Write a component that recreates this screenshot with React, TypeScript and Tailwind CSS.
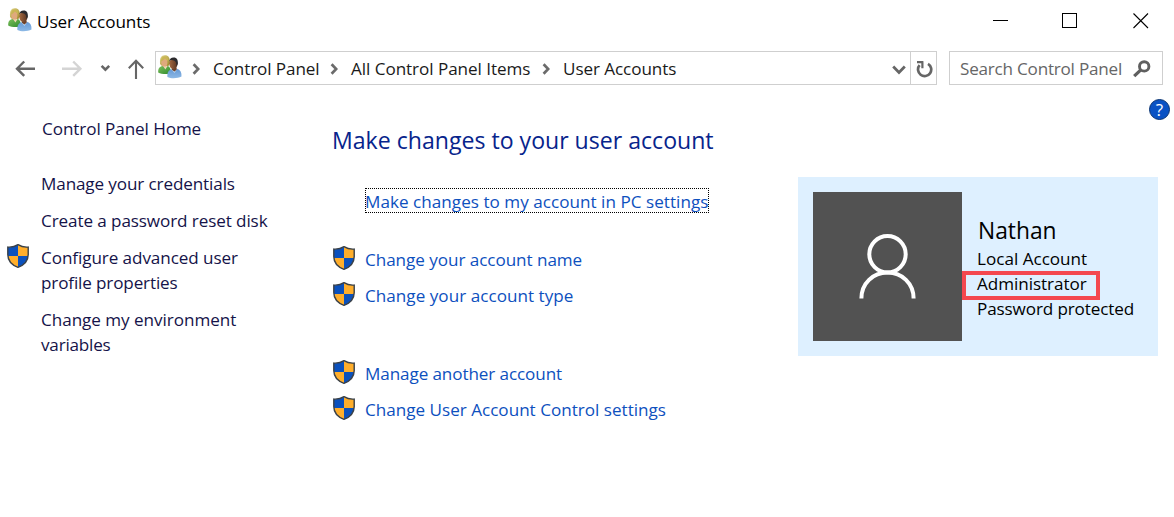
import type { ReactNode } from "react";

function UsersIcon() {
  return (
    <svg width="24" height="24" viewBox="0 0 24 24" className="block shrink-0">
      <defs>
        <linearGradient id="green" x1="0" y1="0" x2="1" y2="1">
          <stop offset="0" stopColor="#7cbf5c" />
          <stop offset="1" stopColor="#2f8a2b" />
        </linearGradient>
        <linearGradient id="blue" x1="0" y1="0" x2="0" y2="1">
          <stop offset="0" stopColor="#6598d4" />
          <stop offset="1" stopColor="#8db9e6" />
        </linearGradient>
        <linearGradient id="hair" x1="0" y1="0" x2="1" y2="1">
          <stop offset="0" stopColor="#e3d78a" />
          <stop offset="1" stopColor="#9a8526" />
        </linearGradient>
        <linearGradient id="brown" x1="0" y1="0" x2="1" y2="0">
          <stop offset="0" stopColor="#a4683f" />
          <stop offset="1" stopColor="#5a3522" />
        </linearGradient>
      </defs>
      <path d="M0.2 17.4C0 13.4 1.4 11.8 4.6 11L10 11C12 12 13 14 13 18.4C9 19.4 3.2 19.2 0.2 17.4Z" fill="url(#green)" />
      <path d="M5 11L7.4 14.6L9.6 11Z" fill="#f1d3b4" />
      <path d="M2 8.6C1.6 3.2 3 0.2 6.8 0.2C10.6 0.2 12 2.6 12 8.4L10.4 11L3 10.6Z" fill="url(#hair)" />
      <ellipse cx="6.4" cy="7.4" rx="3" ry="4.2" fill="#dfa97c" />
      <path d="M3 6.4C4.4 5.8 6.2 4.8 7 3.2C8 4.6 9.4 5.6 10.4 6.2C10.2 2.8 9 1.4 6.6 1.4C4.2 1.4 3.1 3 3 6.4Z" fill="#c9b654" />
      <path d="M9.4 22C9 17.2 10.6 15 13.6 14.2L19 13.800C22.200 14.600 23.700 17.200 23.500 21.600C19.800 23.600 13.200 24 9.400 22Z" fill="url(#blue)" />
      <path d="M13.4 14.2L16.4 18L19.2 14Z" fill="#c3d8ef" />
      <path d="M13.8 12.4H18.6V14.8L16.4 16.6L14 14.8Z" fill="#6e4128" />
      <ellipse cx="15.4" cy="8.800" rx="4.100" ry="5.300" fill="url(#brown)" />
      <path d="M11.2 6.400C11.600 3.600 13 2.400 15.600 2.400C19 2.400 20.200 5 19.800 9L18.600 11.200L18 7.400C16.800 5.600 14.800 4.800 12.800 5Z" fill="#2c2a2d" />
    </svg>
  );
}

function Shield() {
  return (
    <svg width="22" height="24" viewBox="0 0 22 24" className="block shrink-0">
      <defs>
        <clipPath id="shieldShape">
          <path d="M11 0.7C8 2.6 4.4 3.4 0.8 3.1V10.4C0.8 16.6 4.6 20.8 11 23.3C17.4 20.8 21.2 16.6 21.2 10.4V3.1C17.6 3.4 14 2.6 11 0.7Z" />
        </clipPath>
      </defs>
      <g clipPath="url(#shieldShape)">
        <rect width="22" height="24" fill="#0b51bd" />
        <rect x="11" width="11" height="12" fill="#ffae2b" />
        <rect y="12" width="11" height="12" fill="#ffae2b" />
      </g>
      <path d="M11 0.7C8 2.6 4.4 3.4 0.8 3.1V10.4C0.8 16.6 4.6 20.8 11 23.3C17.4 20.8 21.2 16.6 21.2 10.4V3.1C17.6 3.4 14 2.6 11 0.7Z" fill="none" stroke="#3a4148" strokeWidth="1.4" />
    </svg>
  );
}

function Crumb() {
  return (
    <svg width="8" height="12" viewBox="0 0 8 12" className="block shrink-0">
      <path d="M1.6 1.2L6.2 6L1.6 10.8" fill="none" stroke="#6b6b6b" strokeWidth="2.7" />
    </svg>
  );
}

function TaskLink({ children }: { children: ReactNode }) {
  return (
    <li className="flex h-[25px] items-start gap-[10px]">
      <div className="-mt-px">
        <Shield />
      </div>
      <a className="text-[#0d50be]">{children}</a>
    </li>
  );
}

function TitleBar() {
  return (
    <header className="flex h-[51px] items-start pt-2 pl-2">
      <UsersIcon />
      <h1 className="mt-px ml-[5px] tracking-[-0.08px]">User Accounts</h1>
      <svg width="156" height="16" viewBox="0 0 156 16" className="mt-[5px] mr-[25px] ml-auto block" fill="none" stroke="#000" strokeWidth="1.1">
        <path d="M0 7.5H15" shapeRendering="crispEdges" />
        <rect x="69.5" y="0.5" width="14" height="14" shapeRendering="crispEdges" />
        <path d="M140.5 0.5L155 15M155 0.5L140.5 15" />
      </svg>
    </header>
  );
}

function NavBar() {
  return (
    <nav className="flex h-[34px] text-[#1a1a1a]">
      <svg width="155" height="34" viewBox="0 0 155 34" className="block shrink-0" fill="none">
        <path d="M17 17.7H35M24.2 10.500L17 17.700L24.200 24.900" stroke="#666" strokeWidth="2.4" />
        <path d="M62 17.7H80M73.2 10.5L80.4 17.7L73.2 24.9" stroke="#d4d4d4" strokeWidth="2.4" />
        <path d="M101.6 14.8L105.4 18.6L109.2 14.8" stroke="#666" strokeWidth="2.6" />
        <path d="M136 28V10M128.8 17.200L136 9.800L143.200 17.200" stroke="#666" strokeWidth="2.1" />
      </svg>
      <div className="flex w-[782px] border border-[#cfcfcf]">
        <div className="flex flex-1 items-start pt-[3px] pl-[2px]">
          <div className="w-[34px]">
            <UsersIcon />
          </div>
          <div className="mt-[8px] w-[21px]">
            <Crumb />
          </div>
          <span className="mt-px w-[117px] tracking-[-0.1px] whitespace-nowrap">Control Panel</span>
          <div className="mt-[8px] w-[21px]">
            <Crumb />
          </div>
          <span className="mt-px w-[191px] tracking-[-0.05px] whitespace-nowrap">All Control Panel Items</span>
          <div className="mt-[8px] w-[21px]">
            <Crumb />
          </div>
          <span className="mt-px tracking-[-0.08px] whitespace-nowrap">User Accounts</span>
          <svg width="14" height="10" viewBox="0 0 14 10" className="mt-[10px] mr-[4px] ml-auto block">
            <path d="M1.2 1.6L7 7.4L12.8 1.6" fill="none" stroke="#666" strokeWidth="2.8" />
          </svg>
        </div>
        <div className="flex w-[26px] items-start border-l border-[#cfcfcf] pt-[8px] pl-[4px]">
          <svg width="18" height="18" viewBox="0 0 18 18" className="block" fill="none" stroke="#666">
            <path d="M4.600 5.200A6.600 6.600 0 1 0 13 3.800" strokeWidth="2.700" />
            <path d="M2 2.200H8.400M7.400 2.200V8.200" strokeWidth="2.200" />
          </svg>
        </div>
      </div>
      <div className="ml-[12px] flex w-[214px] items-start border border-[#cfcfcf] pt-[3px] pl-[10px] text-[#666]">
        <span className="mt-px w-[173px] tracking-[-0.22px] whitespace-nowrap">Search Control Panel</span>
        <svg width="18" height="18" viewBox="0 0 18 18" className="mt-[5px] block shrink-0" fill="none" stroke="#5f5f5f">
          <circle cx="11.2" cy="6.4" r="4.700" strokeWidth="2.900" />
          <path d="M7.8 9.8L1.200 16.200" strokeWidth="3.200" />
        </svg>
      </div>
    </nav>
  );
}

function Sidebar() {
  return (
    <aside className="w-[333px] pt-[31px] pl-[7px] tracking-[-0.08px] text-[#151349]">
      <a className="block pl-[35px]">Control Panel Home</a>
      <ul className="mt-[30px] flex flex-col gap-[12px]">
        <li className="pl-[34px] tracking-[-0.12px]">Manage your credentials</li>
        <li className="pl-[34px] tracking-[-0.1px]">Create a password reset disk</li>
        <li className="flex items-start gap-[12px]">
          <div className="-mt-px">
            <Shield />
          </div>
          <span>
            Configure advanced user
            <br />
            <span className="tracking-[-0.14px]">profile properties</span>
          </span>
        </li>
        <li className="pl-[34px]">
          <span className="tracking-[-0.04px]">Change my environment</span>
          <br />
          <span className="tracking-[-0.2px]">variables</span>
        </li>
      </ul>
    </aside>
  );
}

function Main() {
  return (
    <main className="w-[465px] pt-[39px]">
      <h2 className="-ml-px text-[23.1px] leading-[32px] text-[#07248c]">Make changes to your user account</h2>
      <a className="mt-[32px] ml-[32px] flex h-[25px] w-[344px] items-center text-[#0d50be] outline-1 -outline-offset-1 outline-dotted outline-black">
        <span className="-mb-[2px] tracking-[0.03px] whitespace-nowrap">Make changes to my account in PC settings</span>
      </a>
      <ul className="mt-[34px] flex flex-col gap-[11px]">
        <TaskLink>
          <span className="tracking-[-0.05px]">Change your account name</span>
        </TaskLink>
        <TaskLink>
          <span className="tracking-[0.03px]">Change your account type</span>
        </TaskLink>
      </ul>
      <ul className="mt-[53px] flex flex-col gap-[11px]">
        <TaskLink>
          <span className="tracking-[-0.1px]">Manage another account</span>
        </TaskLink>
        <TaskLink>Change User Account Control settings</TaskLink>
      </ul>
    </main>
  );
}

function AccountCard() {
  return (
    <section className="flex h-[179px] w-[360px] bg-[#def0ff] p-[15px] text-black">
      <svg width="149" height="149" viewBox="0 0 149 149" className="block shrink-0 bg-[#525252]" fill="none" stroke="#fff" strokeWidth="4">
        <circle cx="74.5" cy="62.3" r="18.2" />
        <path d="M48.4 106.6C48.4 91.5 60 80.6 74.5 80.6S100.6 91.5 100.6 106.6" />
      </svg>
      <div className="pt-[23px]">
        <h3 className="-mb-px pl-[16px] text-[22.8px] leading-[32px]">Nathan</h3>
        <p className="pl-[15px]">Local Account</p>
        <p className="-mb-[4px] h-[29px] w-[138px] border-4 border-[#f4484f] pl-[11px]">
          <span className="-mt-[4px] block tracking-[-0.05px]">Administrator</span>
        </p>
        <p className="pl-[15px] tracking-[-0.12px]">Password protected</p>
      </div>
    </section>
  );
}

export default function App() {
  return (
    <div className="h-[517px] w-[1174px] overflow-hidden bg-white font-['Open_Sans','Noto_Sans',sans-serif] text-[17.1px] leading-[25px] text-black">
      <TitleBar />
      <NavBar />
      <div className="flex">
        <Sidebar />
        <Main />
        <div className="flex flex-1 flex-col pt-[14px]">
          <div className="mr-[4px] flex h-[21px] w-[21px] items-center justify-center self-end rounded-full border border-[#0a3472] bg-[#0a52c4] text-[17px] leading-none text-white">
            ?
          </div>
          <div className="mt-[57px]">
            <AccountCard />
          </div>
        </div>
      </div>
    </div>
  );
}
